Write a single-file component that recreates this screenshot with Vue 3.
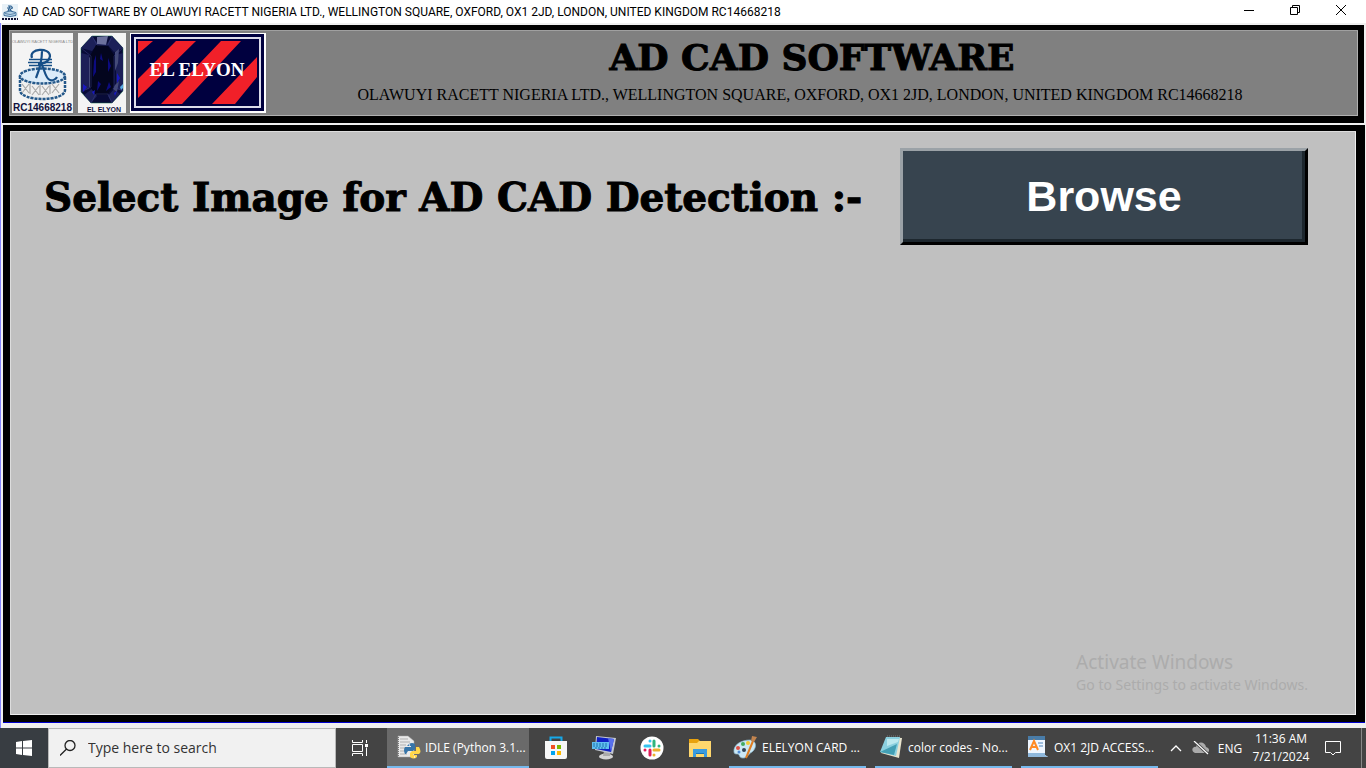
<script setup>
const company = 'OLAWUYI RACETT NIGERIA LTD., WELLINGTON SQUARE, OXFORD, OX1 2JD, LONDON, UNITED KINGDOM RC14668218'
</script>

<template>
  <div class="desktop">
    <header class="titlebar">
      <svg class="app-icon" viewBox="0 0 16 16" aria-hidden="true">
        <path fill="#e8f1f7" d="M0 0h16v16H0z" />
        <path fill="none" stroke="#245a8c" stroke-width="1" d="M6 2h3q3 1-1 4H6m2-4L6 7m2-1 3 2M5 4h6" />
        <path fill="#b9d5ea" stroke="#245a8c" stroke-width=".8" d="M2 8.500q6-3 12 0v3q-6 2-12 0z" />
        <path stroke="#5f86a8" stroke-width="1" d="M3 9.500q5 2 10 0" fill="none" />
        <path stroke="#111133" stroke-width="2" stroke-dasharray="2 1" d="M0 15h16" />
      </svg>
      <span class="caption">AD CAD SOFTWARE BY {{ company }}</span>
      <div class="window-controls">
        <button aria-label="Minimize"><svg viewBox="0 0 10 10"><path d="M0 5.500h10" /></svg></button>
        <button aria-label="Restore"><svg viewBox="0 0 10 10"><path d="M.5 2.500h7v7h-7zM2.500 2.500v-2h7v7h-2" /></svg></button>
        <button aria-label="Close"><svg viewBox="0 0 10 10"><path d="M0 0l10 10M10 0L0 10" /></svg></button>
      </div>
    </header>

    <section class="banner">
      <div class="logos">
        <svg width="61" height="80" viewBox="0 0 61 80" role="img" aria-label="Racett logo">
          <path fill="#f4f4f4" d="M0 0h61v80H0z" />
          <text x="30.500" y="10" text-anchor="middle" class="logo-top">OLAWUYI RACETT NIGERIA LTD</text>
          <path d="M8 43v14c0 12 45 12 45 0V43" fill="#f0f0f0" stroke="#24588a" stroke-width="2.500" stroke-dasharray="3 1" />
          <ellipse cx="30.500" cy="43" rx="22.500" ry="7.500" fill="#dcecf9" stroke="#24588a" stroke-width="2.500" stroke-dasharray="3 1" />
          <path d="M10 51l7 9m0-9-7 9m10-7 7 9m0-9-7 9m10-9 7 9m0-9-7 9m10-11 7 9m0-9-7 9M18 51v10m10-9v10m10-10v9" fill="none" stroke="#aaa" stroke-width="1.200" />
          <path d="M20 25c-4-10 18-11 18-2-1 7-9 8-12 8M30 18c0 10-2 17-6 27M29 31c3 2 4 15 9 16 3 1 6-1 7-3" fill="none" stroke="#174f87" stroke-width="2.200" />
          <path d="M17 26.500h23M16 29.500h24M17 32.500h23" stroke="#174f87" stroke-width="1.400" />
          <text x="30.500" y="78" text-anchor="middle" class="logo-reg">RC14668218</text>
        </svg>
        <svg width="48" height="80" viewBox="0 0 48 80" role="img" aria-label="El Elyon gem">
          <path fill="#f4f4f4" d="M0 0h48v80H0z" />
          <path fill="#080b38" stroke="#16734e" stroke-width=".5" d="M14 3h20l11 12v43L34 70H13L3 59V15z" />
          <path fill="#1c2058" d="M14 3 3 15l11 3 6-7zM34 3l11 12-9 4-7-8zM3 20l8 2v34l-8 2zM45 20l-7 2v34l7 2zM13 70l-7-8 8-6 5 7zM34 70l8-9-6-5-6 7z" />
          <path fill="#6c719d" d="m19 4 11-1-2 9-9-1z" />
          <path fill="#444a78" d="M37 19l4-3-1 14-3 8zM11 25l3-4v30l-3 4zM37 52l4-4-2 11-4-3z" />
          <path fill="#03051e" d="m18 12 12 1 6 9v31l-7 9H18l-6-8V23z" />
          <path fill="none" stroke="#3a4084" stroke-width=".5" d="m14 3 5 9h11l4-9M3 15l10 8v31L3 59M45 15l-9 8v31l9 4M13 70l5-9h12l4 9" />
          <path fill="#0c0b80" d="m16 28 2-6v17l-3 5zM30 25l3 8-3 6zM20 48l3 3-4 7zM31 49l2 5-5 4zM23 20l2 8-3-2z" />
          <path fill="#1919c0" d="m5 51 4 3-4 5zM39 40l3 5-3 5zM14 59l3-2-1 5zM36 60l3-2-2 5z" />
          <path fill="#56a9e3" d="m42 54 3-3v4l-2 2z" />
          <text x="26" y="79" text-anchor="middle" class="gem-name">EL ELYON</text>
        </svg>
        <svg width="136" height="80" viewBox="0 0 136 80" role="img" aria-label="El Elyon striped logo">
          <path fill="#fff" d="M0 0h136v80H0z" />
          <path fill="#00003f" d="M1 1h133v77H1z" />
          <path fill="none" stroke="#dcdcea" stroke-width="2" d="M5 5h125v69H5z" />
          <path fill="#f12029" d="M8 8h15L8 21zM46 8h20L8 65V46zM91 8h20L52 71H31zM127 24v20l-22 27H82z" />
          <text x="67" y="43" text-anchor="middle" class="stripe-name">EL ELYON</text>
        </svg>
      </div>
      <div class="banner-text">
        <h1>AD CAD SOFTWARE</h1>
        <p>{{ company }}</p>
      </div>
    </section>

    <main class="workspace">
      <div class="select-row">
        <label for="browse">Select Image for AD CAD Detection :-</label>
        <button id="browse" class="browse">Browse</button>
      </div>
      <aside class="activation">
        <strong>Activate Windows</strong>
        <span>Go to Settings to activate Windows.</span>
      </aside>
    </main>

    <footer class="taskbar">
      <button class="start" aria-label="Start">
        <svg width="16" height="16" viewBox="0 0 16 16"><path fill="#fff" d="M0 2l6-1v6.500H0zM7 1l9-1v7.500H7zM0 8.500h6V15l-6-1zM7 8.500h9V16l-9-1z" /></svg>
      </button>
      <div class="search">
        <svg width="16" height="16" viewBox="0 0 16 16"><path d="M15 5.500a5 5 0 1 1-10 0 5 5 0 0 1 10 0zM6.300 9.300 0 15.500" fill="none" stroke="#222" stroke-width="1.300" /></svg>
        <input type="text" aria-label="Search" placeholder="Type here to search" />
      </div>
      <button class="taskview" aria-label="Task view">
        <svg width="17" height="16" viewBox="0 0 17 16"><path d="M.5 0v2.500h10V0M.5 4.500h10v7H.5zM.5 16v-2.500h10V16M14.500 0v3M14.500 7.500V16" fill="none" stroke="#fff" /><path fill="#fff" d="M13 4h3v3h-3z" /></svg>
      </button>
      <button class="task active">
        <svg class="ico" viewBox="0 0 24 24">
          <path fill="#e9e9e9" stroke="#aaa" stroke-width=".5" d="M1 1h10l6 5v16H1z" />
          <path stroke="#999" stroke-width=".7" d="M3 4h8M3 7h10M3 10h6M3 13h5M3 16h6M3 19h7" /><path stroke="#777" stroke-dasharray="1 1" d="M1.500 2v20" />
          <path fill="#3775a9" d="M12 9q3-2 6 0v5l-2 2h-5l-2 3H8q-2-4 0-7h6v-1h-4z" /><path fill="#ffd64a" d="M19 12h3q3 5 0 7h-6v1h4v2q-3 3-7 0v-4l2-2h4z" /><circle cx="12.500" cy="10" r=".7" fill="#fff" /><circle cx="17.500" cy="22" r=".7" fill="#fff" />
        </svg><span>IDLE (Python 3.1...</span>
      </button>
      <div class="pins">
        <button aria-label="Store"><svg class="ico" viewBox="0 0 24 24"><path d="M6.500 6V1.500h11V6" fill="none" stroke="#16a8e8" stroke-width="2" /><path fill="#f7f7f7" d="M1 5h22v16q0 2-2 2H3q-2 0-2-2z" /><path fill="#f25022" d="M7 9h4v4H7z" /><path fill="#7fba00" d="M13 9h4v4h-4z" /><path fill="#00a4ef" d="M7 15h4v4H7z" /><path fill="#ffb900" d="M13 15h4v4h-4z" /></svg></button>
        <button aria-label="Remote computer"><svg class="ico" viewBox="0 0 24 24"><ellipse cx="14" cy="20.500" rx="7" ry="3" fill="#d4d4d4" /><path fill="#aaa" d="m12 15 6 1v4h-7z" /><path fill="#c3c7d0" d="m4 0 20 2-3 16-18-4z" /><path fill="#1020c4" d="m5 1 17 2-3 13-15-3z" /><path fill="#5870ec" d="m16 2 6 1-3 13z" /><path fill="#61bdf0" d="M0 6h17v7H0z" /><path stroke="#1d72ad" stroke-width="1" stroke-dasharray="2 1" d="M1 8h15M1 10h15M3 12h11" /></svg></button>
        <button aria-label="Slack"><svg class="ico" viewBox="0 0 24 24"><circle cx="12" cy="12" r="11.500" fill="#fff" /><g stroke-width="3" stroke-linecap="round"><path stroke="#36c5f0" d="M10 5v0M5 10h5" /><path stroke="#2eb67d" d="M14 5v5M19 10h0" /><path stroke="#ecb22e" d="M14 14h5M14 19h0" /><path stroke="#e01e5a" d="M10 14v5M5 14h0" /></g></svg></button>
        <button aria-label="File Explorer"><svg class="ico" viewBox="0 0 24 24"><path fill="#e9a20d" d="M1 3h9l2 2h11v6H1z" /><path fill="#ffd76d" d="M1 7h8l2-2h12v16H1z" /><path fill="#3b9bdf" d="M5 13h14v8h-3v-4H8v4H5z" /><path fill="#1876b8" d="M8 17h8v1H8z" /></svg></button>
      </div>
      <div class="tasks">
        <button class="task">
          <svg class="ico" viewBox="0 0 24 24"><path fill="#cce8f5" stroke="#8bb9d0" stroke-width=".7" d="M1 17C0 10 8 5 17 5c8 1 6 9 2 12-4 2-4 6-9 6-4 0-3-3-5-4-2 0-4 0-4-2z" /><circle cx="5" cy="13" r="2" fill="#df5146" /><circle cx="10" cy="9" r="2" fill="#43ab62" /><circle cx="15" cy="8" r="2" fill="#f3cb36" /><circle cx="6" cy="17" r="1.500" fill="#518dd8" /><circle cx="11" cy="15" r="2" fill="#345" /><path stroke="#df7d22" stroke-width="2" d="m13 23 7-17" /><path fill="#c2844f" d="m18 6 1-5 5 1-3 5z" /></svg><span>ELELYON CARD ...</span>
        </button>
        <button class="task">
          <svg class="ico" viewBox="0 0 24 24"><path fill="#e9e4ce" d="m8 2 15 1-3 20-18-5z" /><path fill="#8bd0df" d="M7 2h14l-4 19-16-4z" /><path fill="#429fb4" d="m18 9-3 11-14-3z" /><path fill="#bce9ef" d="M8 4h12l-1 3-11 4z" /><path stroke="#777" stroke-dasharray="1 1" d="M8 1h14" /></svg><span>color codes - No...</span>
        </button>
        <button class="task">
          <svg class="ico" viewBox="0 0 24 24"><path fill="#eff6ff" d="M3 1h17v19l3 2H3z" /><path fill="#497ca8" d="M3 1h17v4H3z" /><path fill="#8fb8dc" d="M3 18h17v2l3 2H3z" /><path fill="none" stroke="#ff8b25" stroke-width="2" d="m5 15 4-9 4 9M6 12h6" /><path stroke="#4b84bc" d="M13 8h5M14 11h4" /></svg><span>OX1 2JD ACCESS...</span>
        </button>
      </div>
      <div class="tray">
        <button aria-label="Hidden icons"><svg width="12" height="8" viewBox="0 0 12 8"><path d="m1 7 5-5 5 5" fill="none" stroke="#fff" stroke-width="1.300" /></svg></button>
        <button aria-label="OneDrive offline"><svg width="17" height="14" viewBox="0 0 17 14"><path fill="#aaa" d="M3 12C-2 10 1 5 4 6c1-6 9-6 10 0 4 1 4 5 1 6z" /><path stroke="#444" stroke-width="3" d="m2 0 14 13" /><path stroke="#fff" stroke-width="1.200" d="m2 0 14 13" /></svg></button>
        <button class="lang">ENG</button>
        <button class="clock"><span>11:36 AM</span><span>7/21/2024</span></button>
        <button class="notice" aria-label="Notifications"><svg width="16" height="17" viewBox="0 0 16 17"><path d="M.5 1.500h15v11h-5L8 15l-2.500-2.500h-5z" fill="none" stroke="#fff" /></svg></button>
        <button class="peek" aria-label="Show desktop"></button>
      </div>
    </footer>
  </div>
</template>

<style>
body { background: #f0f0f0; }
</style>

<style scoped>
* { box-sizing: border-box; }
button { font: inherit; color: inherit; background: none; border: 0; padding: 0; }
.desktop { min-height: 100vh; display: flex; flex-direction: column; font-family: "Open Sans", sans-serif; font-size: 12px; background: #f0f0f0; box-shadow: inset 1px 0 #8585ff; }
.titlebar { height: 23px; flex: none; margin-bottom: 2px; background: #fff; display: flex; align-items: center; padding-left: 2px; }
.app-icon { width: 16px; height: 16px; margin-right: 5px; }
.caption { flex: 1; white-space: nowrap; font-family: Roboto, sans-serif; color: #000; }
.window-controls { display: flex; height: 100%; }
.window-controls button { width: 46px; display: grid; place-items: center; padding-bottom: 3px; }
.window-controls button:last-child { margin-right: 2px; }
.window-controls svg { width: 10px; height: 10px; fill: none; stroke: #000; }
.banner { flex: none; margin: 0 2px; border: solid #000; border-width: 5px 6px 7px 7px; background: #808080; box-shadow: inset 1px 1px #a0a0a0, inset -1px -1px #b0b0b0; display: flex; height: 98px; }
.logos { display: flex; gap: 4px; padding: 3px 0 0 3px; flex: none; }
.logos svg:first-child { margin-right: 1px; }
.logo-top { font: 4px "Liberation Sans", sans-serif; fill: #888; }
.logo-reg { font: bold 10px "Liberation Sans", sans-serif; fill: #11113e; }
.gem-name { font: bold 7px "Liberation Sans", sans-serif; fill: #11113e; }
.stripe-name { font: bold 19px "Liberation Serif", serif; fill: #fff; }
.banner-text { flex: 1; display: flex; flex-direction: column; align-items: center; color: #000; white-space: nowrap; }
h1 { margin: 7px 0 0; font: bold 36px/40px "DejaVu Serif", serif; -webkit-text-stroke: 1px #000; }
.banner-text p { margin: 8px 24px 0 0; font: 16px/20px "Liberation Serif", serif; }
.workspace { position: relative; flex: 1; margin: 2px 1px 6px 3px; border: solid #000; border-width: 6px 9px 7px 7px; background: #c0c0c0; box-shadow: inset 1px 1px #ddd, inset -1px -1px #eee, 0 1px #0000d0; }
.select-row { display: flex; align-items: center; padding: 17px 48px 0 34px; }
.select-row label { flex: 1; white-space: nowrap; color: #000; font: bold 39px/48px "DejaVu Serif", serif; -webkit-text-stroke: 1px #000; }
.browse { flex: none; width: 408px; height: 97px; padding-bottom: 2px; background: #37444f; border: 3px solid; border-color: #9ba2a7 #000 #000 #9ba2a7; box-shadow: inset -3px -3px #1d272e; color: #fff; font: bold 43px/48px "Liberation Sans", sans-serif; }
.activation { position: absolute; right: 48px; bottom: 20px; display: flex; flex-direction: column; color: #acacac; font-family: "Noto Sans", sans-serif; font-size: 14px; line-height: 20px; }
.activation strong { font-weight: 400; font-size: 19px; line-height: 26px; }
.taskbar { height: 40px; flex: none; display: flex; align-items: stretch; background: #444; color: #fff; white-space: nowrap; }
.taskbar button { display: flex; align-items: center; justify-content: center; }
.start { width: 48px; background: #383d42; }
.search { width: 288px; display: flex; align-items: center; gap: 12px; padding-left: 11px; border: 1px solid #b9b9b9; background: #f1f1f1; }
.search input { min-width: 0; flex: 1; border: 0; padding: 0; background: transparent; font: 14px/20px "Open Sans", sans-serif; color: #333; }
.search input::placeholder { color: #333; opacity: 1; }
.taskview { width: 51px; padding-right: 3px; }
.ico { width: 24px; height: 24px; flex: none; }
.task { width: 137px; border-bottom: 2px solid #76b9ed; gap: 5px; }
.taskbar .task { justify-content: flex-start; padding-left: 4px; }
.taskbar .task.active { width: 142px; background: #6a6a6a; padding-left: 10px; gap: 4px; }
.pins { display: flex; padding-left: 3px; }
.pins button { width: 48px; }
.tasks { display: flex; gap: 9px; margin-left: 5px; }
.tray { display: flex; margin-left: auto; }
.tray button:nth-child(-n+2) { width: 24px; }
.tray .lang { width: 36px; }
.tray .clock { width: 66px; flex-direction: column; line-height: 18px; }
.tray .notice { width: 37px; margin-right: 10px; }
.tray .peek { width: 5px; border-left: 1px solid #888; }
</style>
